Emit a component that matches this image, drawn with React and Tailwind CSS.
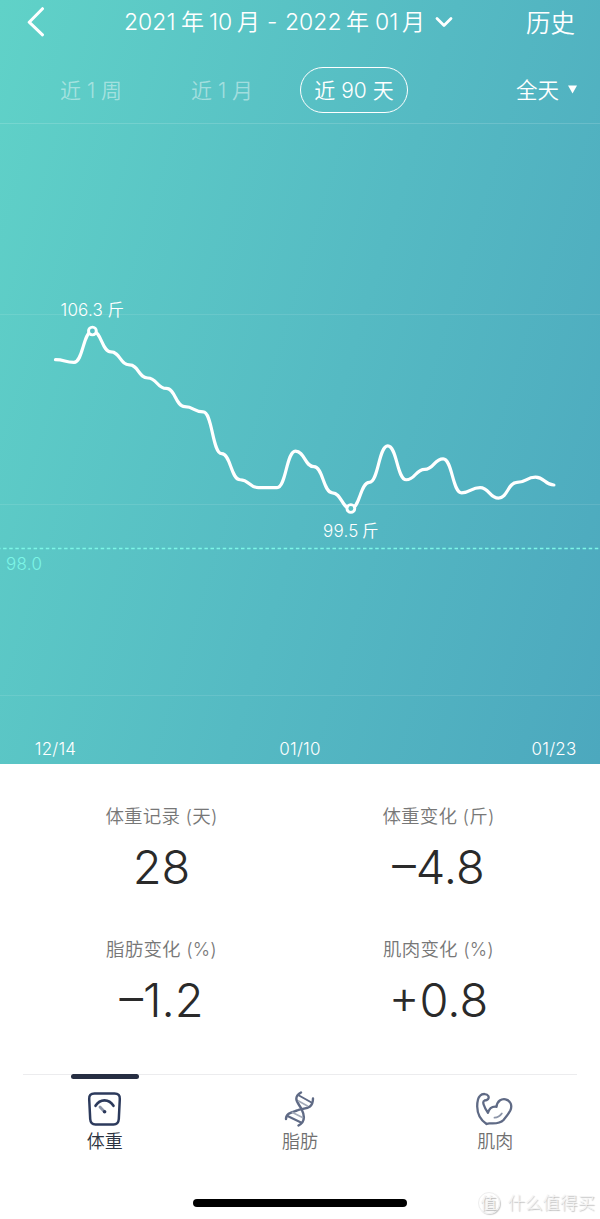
import React, { useState } from "react";

const FONT = "font-['Inter','Noto_Sans_CJK_SC',sans-serif]";

// Daily weight in jin
const weights = [
  105.2, 105.1, 106.3, 105.5, 105.0, 104.5, 104.1, 103.4, 103.2, 101.6,
  100.6, 100.3, 100.3, 101.7, 101.1, 100.1, 99.5, 100.5, 101.9, 100.6,
  101.0, 101.4, 100.1, 100.3, 99.9, 100.5, 100.7, 100.4,
];

const stats = [
  { label: "体重记录 (天)", value: "28" },
  { label: "体重变化 (斤)", value: "–4.8" },
  { label: "脂肪变化 (%)", value: "–1.2" },
  { label: "肌肉变化 (%)", value: "+0.8" },
];

const CHART_HEIGHT = 640;
const GOAL = 98;
const toX = (i) => 55.5 + i * 18.46;
const toY = (w) => 207 + (106.3 - w) * 26.1;

const buildPath = (data) =>
  data
    .map((w, i) => {
      if (i === 0) return `M${toX(0)} ${toY(w)}`;
      const mid = (toX(i - 1) + toX(i)) / 2;
      return `C${mid} ${toY(data[i - 1])} ${mid} ${toY(w)} ${toX(i)} ${toY(w)}`;
    })
    .join(" ");

const ScaleIcon = () => (
  <svg width="36" height="36" viewBox="0 0 36 36" fill="none" strokeLinecap="round" strokeLinejoin="round">
    <path
      d="M7.5 2.5H27.500Q33.200 2.500 32.800 8L31.800 28Q31.400 33.500 26.500 33.500H8.500Q3.600 33.500 3.200 28L2.200 8Q1.800 2.500 7.500 2.500Z"
      stroke="#2c3a5c"
      strokeWidth="2.5"
    />
    <path d="M8.500 14.800C13 7.500 22 7.500 26.500 14.800" stroke="#2c3a5c" strokeWidth="2.6" />
    <path d="M13 16L17 20.300" stroke="#8c95a8" strokeWidth="2.800" />
    <circle cx="17.600" cy="20.800" r="1.800" fill="#2c3a5c" />
  </svg>
);

const DnaIcon = () => (
  <svg width="36" height="36" viewBox="0 0 36 36" fill="none" strokeLinecap="round">
    <path d="M19 1.500C9.500 7 17 13 19.500 18C22.500 24 24 30.500 16.500 34.500" stroke="#5f6a85" strokeWidth="2.400" />
    <path d="M31 7.500C31 19 22 16.500 15 19.500C9 21.500 4 22.500 4 28" stroke="#5f6a85" strokeWidth="2.400" />
    <path d="M17 4.500L29.500 11.500M5.500 25L19 31.500" stroke="#5f6a85" strokeWidth="2" />
    <path d="M16.500 10L25.500 15M10.500 21.500L20.500 26.500" stroke="#a4abb9" strokeWidth="1.700" />
  </svg>
);

const MuscleIcon = () => (
  <svg width="38" height="36" viewBox="0 0 38 36" fill="none" strokeLinecap="round" strokeLinejoin="round">
    <path
      d="M10.500 33C4.500 29 1.300 22.500 1.200 15.500C1.200 10.500 1.500 7 4 4.800C6.500 2.300 11 2.500 12.300 5C13.500 7.500 11.500 9.300 8.500 9.500C6 10.500 7.500 15 12 21.800C13.200 17.500 16.500 15.300 20.500 15.800C21.200 9.800 25.500 7.600 29.500 8.300C34.500 9.300 36.600 14.500 34.300 19.500C32.200 23.500 30 26 27.500 29C23.500 33.300 17 32.500 13.500 32.300C12 32.300 11.300 32.600 10.500 33Z"
      stroke="#5f6a85"
      strokeWidth="2.300"
    />
    <path d="M18.500 26.700C22 26.500 24 25 25.800 22.500" stroke="#8c95a8" strokeWidth="1.800" />
  </svg>
);

const tabs = [
  { name: "体重", Icon: ScaleIcon },
  { name: "脂肪", Icon: DnaIcon },
  { name: "肌肉", Icon: MuscleIcon },
];

const WeightChart = () => (
  <svg width="600" height={CHART_HEIGHT} className="block">
    {[190.5, 380.5, 571.5].map((y) => (
      <line key={y} x1="0" x2="600" y1={y} y2={y} stroke="#fff" strokeOpacity="0.1" />
    ))}

    {/* Goal line */}
    <line x1="-3" x2="600" y1={toY(GOAL) + 0.8} y2={toY(GOAL) + 0.8} stroke="#7cf5e6" strokeWidth="1.5" strokeDasharray="3.500 2.600" />
    <text x="6" y="446" fontSize="17" fontWeight="350" letterSpacing="0.3" fill="#7cf5e6">98.0</text>

    <path d={buildPath(weights)} fill="none" stroke="#fff" strokeWidth="3.200" strokeLinecap="round" />
    {[2, 16].map((i) => (
      <circle key={i} cx={toX(i)} cy={toY(weights[i])} r="3.900" fill="#57bfc3" stroke="#fff" strokeWidth="2.900" />
    ))}

    <g fill="#fff" fontSize="17" fontWeight="350">
      <text x="60.500" y="191.500" letterSpacing="0.2">106.3</text>
      <text x="107.500" y="191.500" fontSize="16.500">斤</text>
      <text x="323" y="412.500" letterSpacing="0.2">99.5</text>
      <text x="362" y="412.500" fontSize="16.500">斤</text>
    </g>
    <g fill="#fff" fontSize="17" fontWeight="350" letterSpacing="0.2">
      <text x="55.500" y="630.500" textAnchor="middle">12/14</text>
      <text x="300" y="630.500" textAnchor="middle">01/10</text>
      <text x="554" y="630.500" textAnchor="middle">01/23</text>
    </g>
  </svg>
);

const App = () => {
  const [activeTab, setActiveTab] = useState("体重");

  return (
    <div className={`relative flex h-[1219px] w-[600px] flex-col overflow-hidden bg-white ${FONT}`}>
      <div className="h-[764px] bg-[linear-gradient(107deg,#60d2c8_0%,#55bac3_55%,#4ca8be_100%)] text-white">
        {/* Title bar */}
        <div className="flex h-[45px] items-center">
          <div className="-mt-px w-[124px] pl-[26px]">
            <svg width="20" height="30" viewBox="0 0 20 30" fill="none" stroke="#fff" strokeWidth="3" strokeLinecap="round" strokeLinejoin="round">
              <path d="M16.500 1.700L3.200 15.200L16.500 27.800" />
            </svg>
          </div>
          <div className="flex w-[402px] items-center text-[23px]">
            <div className="flex w-[302px] font-[350] whitespace-nowrap">
              <span className="w-[57px]">2021</span>
              <span className="w-[28px]">年</span>
              <span className="w-[28px]">10</span>
              <span className="w-[30px]">月</span>
              <span className="w-[18px]">-</span>
              <span className="w-[61px]">2022</span>
              <span className="w-[29px]">年</span>
              <span className="w-[27px]">01</span>
              <span>月</span>
            </div>
            <svg className="-mt-px ml-[9px]" width="18" height="12" viewBox="0 0 18 12" fill="none" stroke="#fff" strokeWidth="2.800" strokeLinecap="round" strokeLinejoin="round">
              <path d="M2 2.500L9 9.500L16 2.500" />
            </svg>
          </div>
          <span className="mt-px text-[24.5px] font-[350] whitespace-nowrap">历史</span>
        </div>

        {/* Range filter */}
        <div className="flex h-[79px] items-center border-b border-white/15 pt-[11px] text-[21px] font-[350]">
          <span className="w-[191px] pt-[2px] pl-[60px] whitespace-nowrap text-white/45">近 1 周</span>
          <span className="w-[109px] pt-[2px] whitespace-nowrap text-white/45">近 1 月</span>
          <button className="flex h-[46px] w-[108px] items-center justify-center rounded-full border-[1.5px] border-white pt-[2px] whitespace-nowrap">
            近 90 天
          </button>
          <span className="ml-[108px] w-[44px] pt-px text-[21.5px] whitespace-nowrap">全天</span>
          <svg className="ml-2" width="9" height="9" viewBox="0 0 9 9" fill="#fff">
            <path d="M0 0.500H9L4.500 8.500Z" />
          </svg>
        </div>

        <WeightChart />
      </div>

      {/* Summary */}
      <div className="grid h-[310px] grid-cols-2 content-start px-[23px] pt-[39px]">
        {stats.map((item) => (
          <div key={item.label} className="flex h-[133px] flex-col items-center">
            <span className="text-[18.5px] leading-[27px] font-[350] tracking-[0.2px] text-[#777]">{item.label}</span>
            <span className="mt-[9px] text-[47px] leading-[56px] font-[350] text-[#2a2a2a]">{item.value}</span>
          </div>
        ))}
      </div>

      {/* Bottom tabs */}
      <div className="mx-[23px] h-px bg-[#ececee]"></div>
      <div className="grid grid-cols-3 pr-[7px] pl-[7px]">
        {tabs.map(({ name, Icon }) => (
          <button key={name} onClick={() => setActiveTab(name)} className="flex flex-col items-center">
            <div className={`-mt-px h-[5px] w-[68px] rounded-full ${activeTab === name ? "bg-[#262e42]" : ""}`}></div>
            <div className="mt-[12px]">
              <Icon />
            </div>
            <span className={`mt-[2px] text-[18px] leading-[26px] ${activeTab === name ? "font-[350] text-[#2b3240]" : "font-[350] text-[#707070]"}`}>
              {name}
            </span>
          </button>
        ))}
      </div>
      <div className="mx-auto mt-[44px] h-2 w-[214px] rounded-full bg-black"></div>

      {/* Watermark */}
      <div className="absolute right-[5px] bottom-[3px] flex items-center gap-[8px] font-light text-[#f4f4f4] [text-shadow:1px_1px_1px_#bbb]">
        <span className="flex h-[22px] w-[22px] items-center justify-center rounded-full border border-[#eeeeee] text-[16px] font-normal shadow-[1px_1px_1px_#ccc]">
          值
        </span>
        <span className="text-[17.5px] leading-[26px]">什么值得买</span>
      </div>
    </div>
  );
};

export default App;
